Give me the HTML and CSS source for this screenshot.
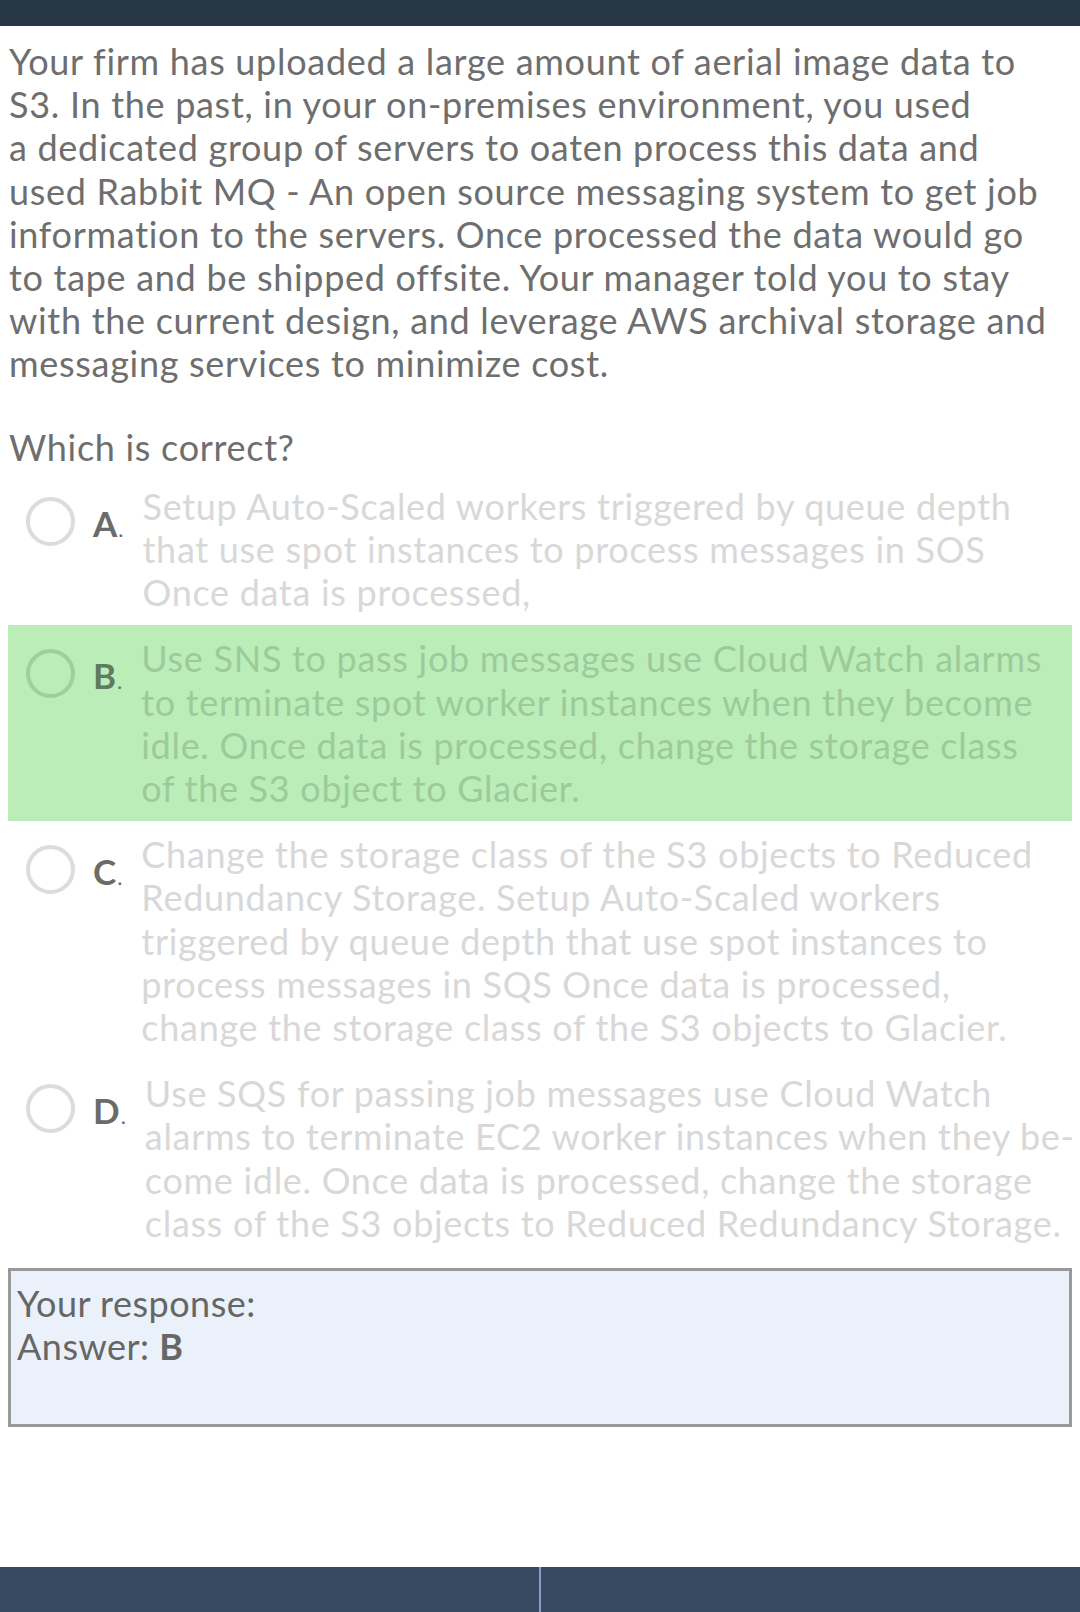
FILE: index.html
```html
<!DOCTYPE html>
<html lang="en">
<head>
<meta charset="utf-8">
<title>Question</title>
<link rel="stylesheet" href="styles.css">
</head>
<body>
<div class="topbar"></div>
<main class="content">
  <p class="question">Your firm has uploaded a large amount of aerial image data to<br>S3. In the past, in your on-premises environment, you used<br>a dedicated group of servers to oaten process this data and<br>used Rabbit MQ - An open source messaging system to get job<br>information to the servers. Once processed the data would go<br>to tape and be shipped offsite. Your manager told you to stay<br>with the current design, and leverage AWS archival storage and<br>messaging services to minimize cost.</p>
  <p class="prompt">Which is correct?</p>
  <ul class="options">
    <li class="option">
      <span class="radio"></span>
      <span class="letter">A<span class="dot">.</span></span>
      <span class="text">Setup Auto-Scaled workers triggered by queue depth that use spot instances to process messages in SOS Once data is processed,</span>
    </li>
    <li class="option correct">
      <span class="radio"></span>
      <span class="letter">B<span class="dot">.</span></span>
      <span class="text">Use SNS to pass job messages use Cloud Watch alarms<br>to terminate spot worker instances when they become<br>idle. Once data is processed, change the storage class<br>of the S3 object to Glacier.</span>
    </li>
    <li class="option">
      <span class="radio"></span>
      <span class="letter">C<span class="dot">.</span></span>
      <span class="text">Change the storage class of the S3 objects to Reduced Redundancy Storage. Setup Auto-Scaled workers triggered by queue depth that use spot instances to process messages in SQS Once data is processed, change the storage class of the S3 objects to Glacier.</span>
    </li>
    <li class="option">
      <span class="radio"></span>
      <span class="letter">D<span class="dot">.</span></span>
      <span class="text">Use SQS for passing job messages use Cloud Watch alarms to terminate EC2 worker instances when they be&shy;come idle. Once data is processed, change the storage class of the S3 objects to Reduced Redundancy Storage.</span>
    </li>
  </ul>
  <div class="response">
    <div>Your response:</div>
    <div>Answer: <b>B</b></div>
  </div>
</main>
<footer class="bottombar">
  <div class="half"></div>
  <div class="divider"></div>
  <div class="half"></div>
</footer>
</body>
</html>
```

FILE: styles.css
```css
html, body {
  margin: 0;
  padding: 0;
  background: #ffffff;
}
body {
  font-family: Lato, "Open Sans", sans-serif;
  font-variant-ligatures: none;
  width: 1080px;
  height: 1612px;
  display: flex;
  flex-direction: column;
  overflow: hidden;
}
.topbar {
  height: 26px;
  background: #283746;
  flex: none;
}
.content {
  flex: 1;
  padding: 0 8px 0 9px;
}
.question {
  margin: 14px 0 0 0;
  font-size: 36px;
  letter-spacing: 0.7px;
  line-height: 43.2px;
  color: #6e6e6e;
}
.prompt {
  margin: 40px 0 4px 0;
  font-size: 36px;
  letter-spacing: 0.7px;
  line-height: 43.2px;
  color: #6e6e6e;
}
.options {
  list-style: none;
  margin: 0 -4px 0 -1px;
  padding: 0;
}
.option {
  display: flex;
  align-items: flex-start;
  padding: 12px 0 11px 0;
}
.radio {
  flex: none;
  width: 41px;
  height: 41px;
  border: 4px solid #dcdcdc;
  border-radius: 50%;
  margin: 12px 0 0 18px;
}
.letter {
  flex: none;
  font-weight: 700;
  font-size: 35px;
  line-height: 43px;
  color: #6b6b6b;
  margin: 17px 0 0 18px;
}
.dot {
  font-weight: 400;
  font-size: 22px;
  margin-left: 1px;
}
.text {
  flex: 1;
  margin-left: 19px;
  font-size: 36px;
  letter-spacing: 0.7px;
  line-height: 43.2px;
  color: #d8d8d8;
}
.option.correct {
  margin-right: 4px;
  background: #bbedb9;
}
.option.correct .text {
  margin-right: -4px;
  color: #9ccb99;
}
.option.correct .radio {
  border-color: #9fcf9c;
}
.option.correct .letter {
  color: #5f7a5d;
}
.response {
  margin: 12px 0 0 -1px;
  border: 3px solid #999999;
  background: #eaf1fa;
  box-sizing: border-box;
  height: 159px;
  padding: 11px 6px 0 6px;
  font-size: 36px;
  letter-spacing: 0.5px;
  line-height: 43px;
  color: #666666;
}
.response b {
  font-weight: 700;
  color: #666666;
}
.bottombar {
  flex: none;
  height: 45px;
  display: flex;
  background: #364b5f;
}
.half {
  flex: 1;
}
.divider {
  width: 2px;
  background: #8d9bd0;
}
```
